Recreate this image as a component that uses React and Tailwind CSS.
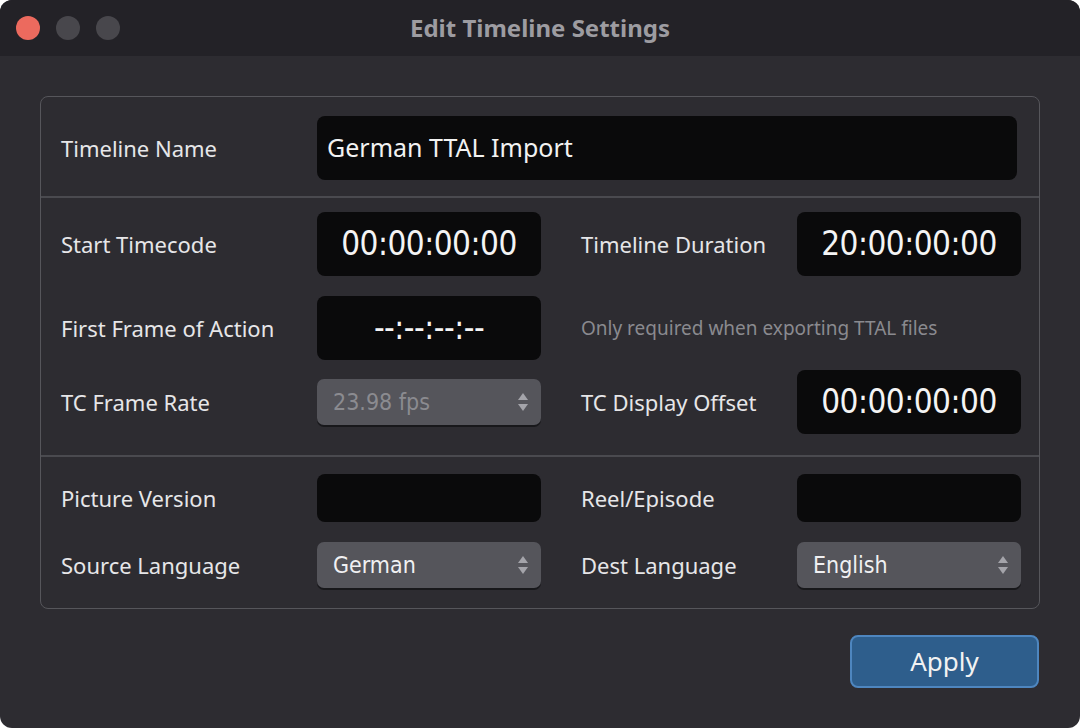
const F = { fontFamily: '"Noto Sans", "Open Sans", sans-serif' };
const N = { fontFamily: '"Liberation Sans Narrow", "DejaVu Sans Condensed", sans-serif' };

function Arrows() {
  return (
    <svg width="12" height="24" viewBox="0 0 12 24" className="shrink-0">
      <path d="M6 3 L11 10 H1 Z" fill="#a4a4aa" />
      <path d="M6 21 L11 14 H1 Z" fill="#a4a4aa" />
    </svg>
  );
}

function Select({ text, dim, h = 'h-[46px]' }) {
  return (
    <div className={`w-[224px] ${h} rounded-[7px] bg-[#55555b] shadow-[0_2px_0_#18181b] flex items-center justify-between pl-4 pr-3`}>
      <span className={`text-[23px] ${dim ? 'text-[#8b8b90]' : 'text-[#f0f0f2]'}`} style={N}>{text}</span>
      <Arrows />
    </div>
  );
}

function TC({ text, h = 'h-[64px]' }) {
  return (
    <div className={`w-[224px] ${h} rounded-[8px] bg-[#0a0a0b] flex items-center justify-center text-[33px] text-[#f4f4f4] tracking-[-0.5px]`} style={N}>{text}</div>
  );
}

const Label = ({ children, w = 'w-[256px]' }) => (
  <div className={`${w} text-[22px] text-[#e6e6e8]`} style={F}>{children}</div>
);

export default function App() {
  return (
    <div className="w-[1080px] h-[728px] bg-white">
      <div className="w-[1080px] h-[728px] rounded-[12px] overflow-hidden bg-[#2d2c31] flex flex-col">
        <div className="h-[56px] bg-[#232227] flex items-center relative shrink-0">
          <div className="flex gap-[16px] pl-[16px]">
            <div className="w-[24px] h-[24px] rounded-full bg-[#ec6a5e]" />
            <div className="w-[24px] h-[24px] rounded-full bg-[#48474c]" />
            <div className="w-[24px] h-[24px] rounded-full bg-[#48474c]" />
          </div>
          <div className="absolute inset-0 flex items-center justify-center text-[24px] font-bold text-[#9d9ca1]" style={F}>Edit Timeline Settings</div>
        </div>
        <div className="px-[40px] pt-[40px]">
          <div className="border border-[#56565b] rounded-[8px]">
            <div className="flex items-center pl-[20px] pr-[22px] pt-[19px] pb-[16px]">
              <Label>Timeline Name</Label>
              <div className="flex-1 h-[64px] rounded-[8px] bg-[#0a0a0b] flex items-center px-[10px] text-[25px] text-[#f2f2f2]" style={F}>German TTAL Import</div>
            </div>
            <div className="border-t-2 border-[#4a4a4f] pl-[20px] pt-[14px] pb-[21px] flex flex-col gap-[20px]">
              <div className="flex items-center">
                <Label>Start Timecode</Label>
                <TC text="00:00:00:00" />
                <div className="w-[256px] pl-[40px] text-[22px] text-[#e6e6e8]" style={F}>Timeline Duration</div>
                <TC text="20:00:00:00" />
              </div>
              <div className="flex items-center">
                <Label>First Frame of Action</Label>
                <TC text="--:--:--:--" />
                <div className="pl-[40px] text-[19px] text-[#8a8a8f]" style={F}>Only required when exporting TTAL files</div>
              </div>
              <div className="flex items-center -mt-[10px]">
                <Label>TC Frame Rate</Label>
                <Select text="23.98 fps" dim />
                <div className="w-[256px] pl-[40px] text-[22px] text-[#e6e6e8]" style={F}>TC Display Offset</div>
                <TC text="00:00:00:00" />
              </div>
            </div>
            <div className="border-t-2 border-[#4a4a4f] pl-[20px] pt-[17px] pb-[20px] flex flex-col gap-[20px]">
              <div className="flex items-center">
                <Label>Picture Version</Label>
                <div className="w-[224px] h-[48px] rounded-[8px] bg-[#0a0a0b]" />
                <div className="w-[256px] pl-[40px] text-[22px] text-[#e6e6e8]" style={F}>Reel/Episode</div>
                <div className="w-[224px] h-[48px] rounded-[8px] bg-[#0a0a0b]" />
              </div>
              <div className="flex items-center">
                <Label>Source Language</Label>
                <Select text="German" />
                <div className="w-[256px] pl-[40px] text-[22px] text-[#e6e6e8]" style={F}>Dest Language</div>
                <Select text="English" />
              </div>
            </div>
          </div>
          <div className="flex justify-end pt-[26px] pr-[1px]">
            <div className="w-[189px] h-[53px] rounded-[8px] bg-[#2e5e8c] border-2 border-[#4e86bf] flex items-center justify-center text-[26px] text-[#f2f2f2]" style={F}>Apply</div>
          </div>
        </div>
      </div>
    </div>
  );
}
